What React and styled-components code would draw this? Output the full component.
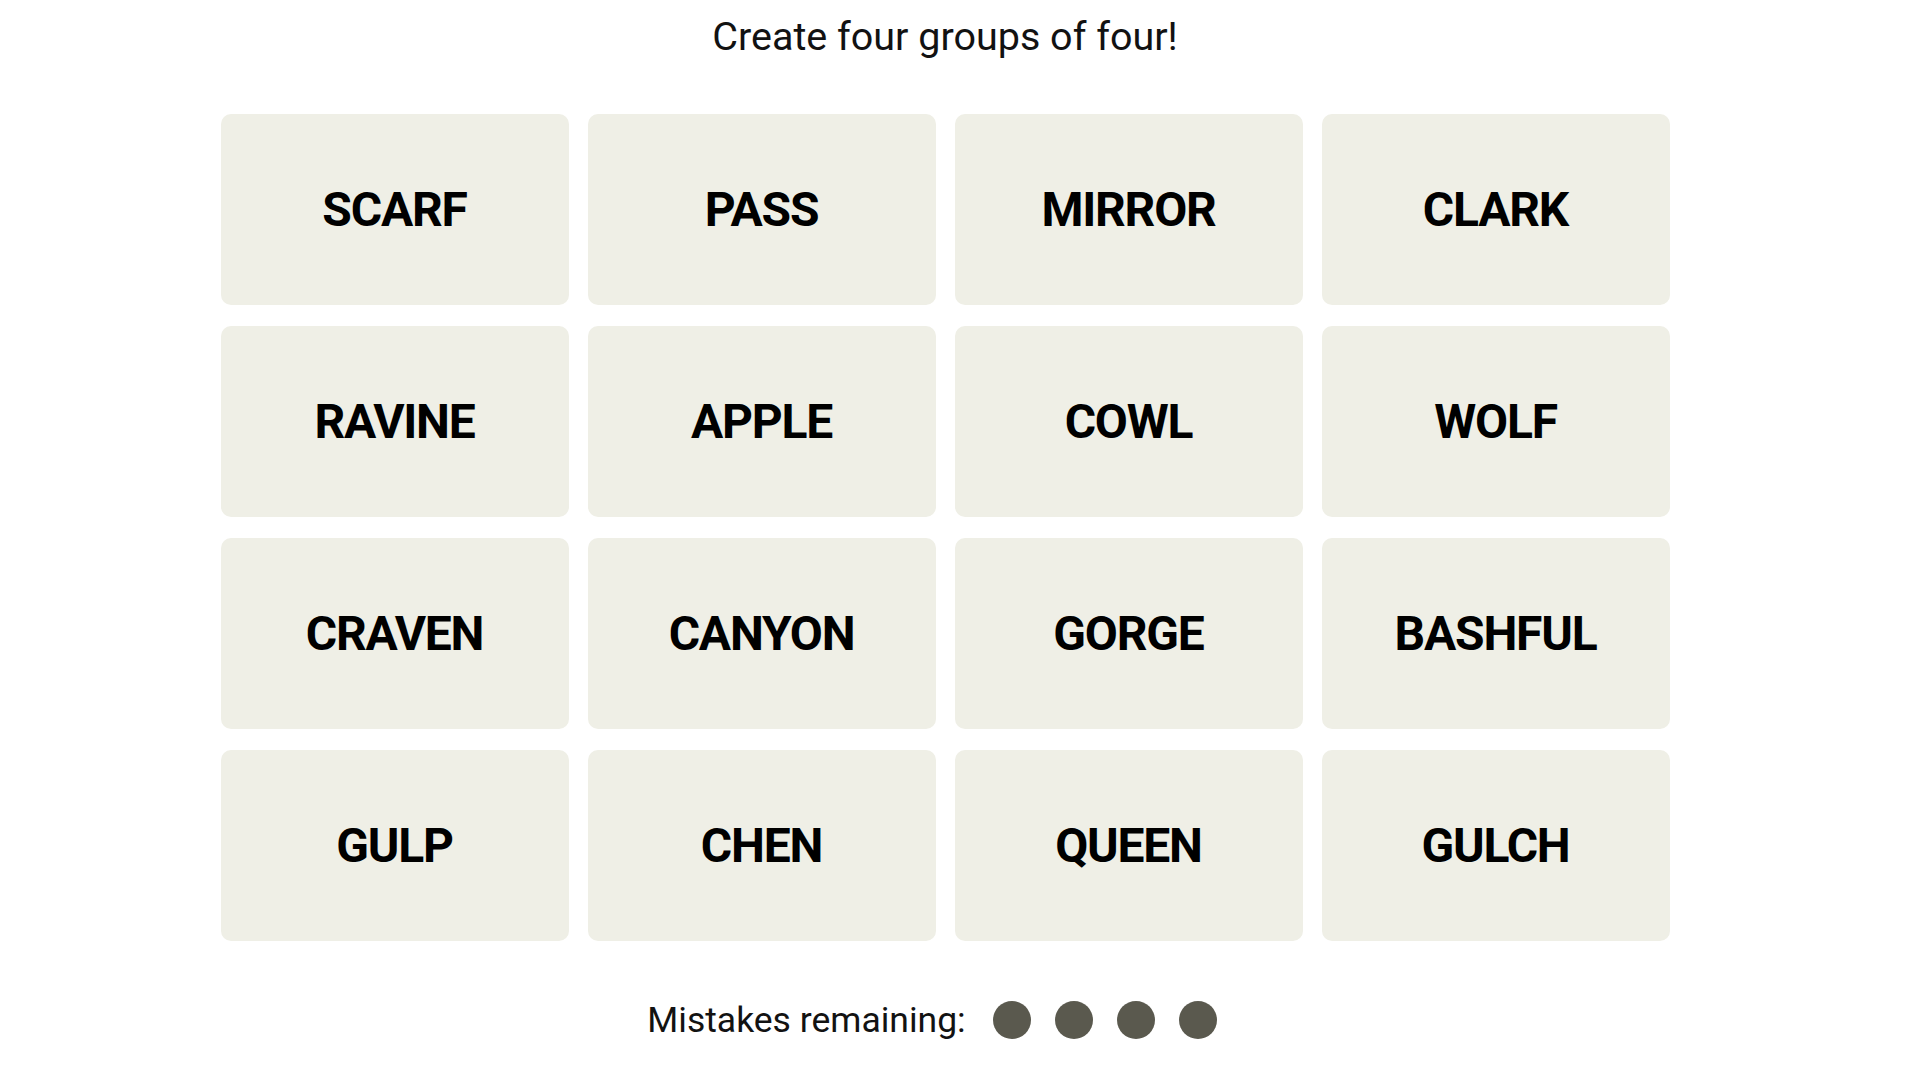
import React from 'react';
import styled, { createGlobalStyle } from 'styled-components';

const GlobalStyle = createGlobalStyle`
  html, body {
    margin: 0;
    padding: 0;
    background: #ffffff;
  }
  body {
    font-family: Roboto, "Liberation Sans", Arial, sans-serif;
    color: #000;
  }
`;

const Page = styled.main`
  display: flex;
  flex-direction: column;
  align-items: center;
  width: 1890px;
  height: 1080px;
  box-sizing: border-box;
  padding-top: 17px;
`;

const Title = styled.h1`
  margin: 0;
  font-size: 39.5px;
  line-height: 40px;
  font-weight: 400;
  color: #121212;
`;

const Grid = styled.section`
  margin-top: 57px;
  display: grid;
  grid-template-columns: repeat(4, 348px);
  grid-auto-rows: 191px;
  column-gap: 19px;
  row-gap: 21px;
`;

const Tile = styled.button`
  border: none;
  border-radius: 10px;
  background: #efefe6;
  display: flex;
  align-items: center;
  justify-content: center;
  font-family: inherit;
  font-size: 48px;
  font-weight: 700;
  letter-spacing: -1.2px;
  text-transform: uppercase;
  color: #000;
  cursor: pointer;
  padding: 0;
`;

const Mistakes = styled.div`
  margin-top: 59px;
  margin-left: -26px;
  display: flex;
  align-items: center;
  gap: 27px;
`;

const MistakesLabel = styled.span`
  font-size: 35.5px;
  line-height: 40px;
  color: #121212;
`;

const Dots = styled.div`
  display: flex;
  gap: 24px;
`;

const Dot = styled.span`
  width: 38px;
  height: 38px;
  border-radius: 50%;
  background: ${p => (p.$used ? 'transparent' : '#5a594e')};
`;

const words = [
  'SCARF', 'PASS', 'MIRROR', 'CLARK',
  'RAVINE', 'APPLE', 'COWL', 'WOLF',
  'CRAVEN', 'CANYON', 'GORGE', 'BASHFUL',
  'GULP', 'CHEN', 'QUEEN', 'GULCH',
];

export default function App() {
  const mistakesLeft = 4;
  return (
    <>
      <GlobalStyle />
      <Page>
        <Title>Create four groups of four!</Title>
        <Grid>
          {words.map(w => (
            <Tile key={w}>{w}</Tile>
          ))}
        </Grid>
        <Mistakes>
          <MistakesLabel>Mistakes remaining:</MistakesLabel>
          <Dots>
            {[0, 1, 2, 3].map(i => (
              <Dot key={i} $used={i >= mistakesLeft} />
            ))}
          </Dots>
        </Mistakes>
      </Page>
    </>
  );
}
